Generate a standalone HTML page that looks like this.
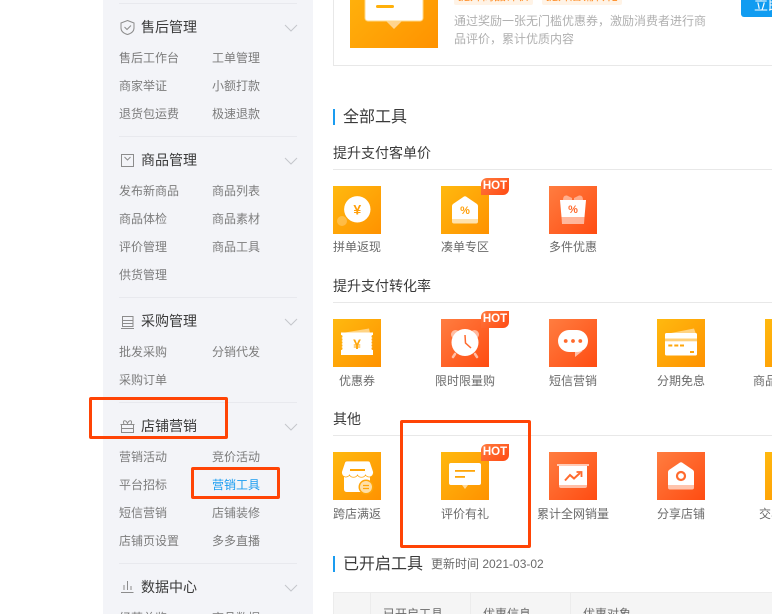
<!DOCTYPE html>
<html lang="zh">
<head>
<meta charset="utf-8">
<title>营销工具</title>
<style>
html,body{margin:0;padding:0;background:#fff}
#p{position:relative;width:772px;height:614px;overflow:hidden;background:#fff;font-family:"Liberation Sans","Noto Sans CJK SC",sans-serif}
#p div,#p span{position:absolute}
.t{line-height:20px;white-space:nowrap}
.s{font-size:12px;color:#7c7c7c}
.h{font-size:14px;color:#3a3a3a;left:141px}
.d{left:119px;width:178px;height:1px;background:#e8e9ee}
.tt{font-size:16px;color:#3a3a3a;left:343px}
.st{font-size:14px;color:#3a3a3a;left:333px}
.ln{left:333px;width:439px;height:1px;background:#e8e8e8}
.lb{font-size:12px;color:#6a6a6a;width:108px;text-align:center}
.hot{width:28px;height:17px;background:linear-gradient(135deg,#ff7a3d,#ff4a14);border-radius:6px 0 6px 0;color:#fff;font-size:11.5px;font-weight:bold;line-height:17px;text-align:center}
.r{border:3px solid #ff4405;border-radius:2px;box-sizing:border-box}
.c1{left:119px}.c2{left:212px}
svg text{font-family:"Liberation Sans",sans-serif;font-weight:bold;text-anchor:middle}
</style>
</head>
<body>
<div id="p">
<div style="left:103px;top:0;width:210px;height:614px;background:#f3f4f8"></div>
<div class="d" style="top:3px"></div>
<div class="d" style="top:136px"></div>
<div class="d" style="top:297px"></div>
<div class="d" style="top:402px"></div>
<div class="d" style="top:563px"></div>

<span class="t h" style="top:17px">售后管理</span>
<span class="t s c1" style="top:48px">售后工作台</span><span class="t s c2" style="top:48px">工单管理</span>
<span class="t s c1" style="top:76px">商家举证</span><span class="t s c2" style="top:76px">小额打款</span>
<span class="t s c1" style="top:104px">退货包运费</span><span class="t s c2" style="top:104px">极速退款</span>

<span class="t h" style="top:150px">商品管理</span>
<span class="t s c1" style="top:181px">发布新商品</span><span class="t s c2" style="top:181px">商品列表</span>
<span class="t s c1" style="top:209px">商品体检</span><span class="t s c2" style="top:209px">商品素材</span>
<span class="t s c1" style="top:237px">评价管理</span><span class="t s c2" style="top:237px">商品工具</span>
<span class="t s c1" style="top:265px">供货管理</span>

<span class="t h" style="top:311px">采购管理</span>
<span class="t s c1" style="top:342px">批发采购</span><span class="t s c2" style="top:342px">分销代发</span>
<span class="t s c1" style="top:370px">采购订单</span>

<span class="t h" style="top:416px">店铺营销</span>
<span class="t s c1" style="top:447px">营销活动</span><span class="t s c2" style="top:447px">竞价活动</span>
<span class="t s c1" style="top:475px">平台招标</span><span class="t s c2" style="top:475px;color:#1a9cf0">营销工具</span>
<span class="t s c1" style="top:503px">短信营销</span><span class="t s c2" style="top:503px">店铺装修</span>
<span class="t s c1" style="top:531px">店铺页设置</span><span class="t s c2" style="top:531px">多多直播</span>

<span class="t h" style="top:577px">数据中心</span>
<span class="t s c1" style="top:608px">经营总览</span><span class="t s c2" style="top:608px">商品数据</span>

<!-- top card -->
<div style="left:333px;top:-10px;width:460px;height:74px;border:1px solid #e8e8e8;box-sizing:content-box"></div>
<div style="left:454px;top:-15px;width:79px;height:20px;background:#fff3e6;border-radius:2px;overflow:hidden"><span class="t" style="left:4px;top:1px;font-size:12px;color:#ff8a1f">提升商品评价</span></div>
<div style="left:542px;top:-15px;width:80px;height:20px;background:#fff3e6;border-radius:2px;overflow:hidden"><span class="t" style="left:4px;top:1px;font-size:12px;color:#ff8a1f">提升店铺转化</span></div>
<span class="t" style="left:454px;top:11px;font-size:12px;color:#b0b0b0">通过奖励一张无门槛优惠券，激励消费者进行商</span>
<span class="t" style="left:454px;top:29px;font-size:12px;color:#b0b0b0">品评价，累计优质内容</span>
<div style="left:741px;top:-10px;width:60px;height:27px;background:#109cf1;border-radius:3px;overflow:hidden"><span class="t" style="left:13px;top:5px;font-size:14px;color:#fff">立即</span></div>

<!-- section titles -->
<div style="left:333px;top:109px;width:2px;height:16px;background:#1a9cf0"></div>
<span class="t tt" style="top:108px">全部工具</span>

<span class="t st" style="top:143px">提升支付客单价</span>
<div class="ln" style="top:169px"></div>
<span class="t st" style="top:276px">提升支付转化率</span>
<div class="ln" style="top:302px"></div>
<span class="t st" style="top:409px">其他</span>
<div class="ln" style="top:435px"></div>

<svg width="772" height="614" viewBox="0 0 772 614" style="position:absolute;left:0;top:0" fill="none">
<defs>
<linearGradient id="y" x1="0" y1="0" x2="1" y2="1"><stop offset="0" stop-color="#ffb90f"/><stop offset="1" stop-color="#ff9200"/></linearGradient>
<linearGradient id="o" x1="0" y1="0" x2="1" y2="1"><stop offset="0" stop-color="#ff7d40"/><stop offset="1" stop-color="#ff4c12"/></linearGradient>
</defs>

<!-- sidebar icons -->
<g stroke="#8c8c8c" stroke-width="1" fill="none">
<path d="M127.5 20.5 L134 23 V28 C134 31.5 131 33.5 127.5 34.5 C124 33.5 121 31.5 121 28 V23 Z"/>
<path d="M124.5 27 L127 29.5 L131 25.5"/>
<rect x="121.5" y="154.5" width="12" height="12"/>
<path d="M124.5 157 L127.5 160 L130.5 157"/>
<path d="M122.5 316.5 H133 V326.5 H122.5 Z M122.5 320.5 H133 M122.5 323.5 H133 M121 328.5 H134"/>
<path d="M121.5 424.5 H133.5 V432.5 H121.5 Z M120.5 424.5 H134.5 M124 424 C122 420 126 419.5 127.5 423.5 C129 419.5 133 420 131 424 M121.5 428.5 H133.5"/>
<path d="M121 592.5 H133.5 M124 590 V585 M127.5 590 V581 M131 590 V586"/>
</g>
<g stroke="#c4c6cc" stroke-width="1" fill="none">
<path d="M285 25 L291 31 L297 25"/>
<path d="M285 158 L291 164 L297 158"/>
<path d="M285 319 L291 325 L297 319"/>
<path d="M285 424 L291 430 L297 424"/>
<path d="M285 585 L291 591 L297 585"/>
</g>

<!-- top illustration -->
<g transform="translate(350,-40)">
<rect width="88" height="88" fill="url(#y)"/>
<path d="M36 61 H52 L44 69 Z" fill="#fff" fill-opacity=".55"/>
<rect x="15" y="10" width="58" height="51" rx="3" fill="#fff" stroke="#ffd98a"/>
<rect x="26" y="45" width="18" height="3" rx="1.5" fill="#ffb00a"/>
</g>

<!-- 拼单返现 -->
<g transform="translate(333,186)">
<rect width="48" height="48" fill="url(#y)"/>
<circle cx="9" cy="35" r="5" fill="#fff" fill-opacity=".25"/>
<circle cx="24.3" cy="23.3" r="13.2" fill="#fff"/>
<text x="24.3" y="28.5" font-size="14" fill="#ff9f0a">¥</text>
</g>

<!-- 凑单专区 -->
<g transform="translate(441,186)">
<rect width="48" height="48" fill="url(#y)"/>
<path d="M11 33 V20 Q11 19 12 18 L23 10.5 Q24 10 25 10.5 L36 18 Q37 19 37 20 V33 Z" fill="#fff"/>
<path d="M11 33 H37 V35.5 Q37 37.5 35 37.5 H13 Q11 37.5 11 35.5 Z" fill="#ffe2ad"/>
<text x="24" y="28" font-size="11" fill="#ff9f0a">%</text>
</g>

<!-- 多件优惠 -->
<g transform="translate(549,186)">
<rect width="48" height="48" fill="url(#o)"/>
<path d="M14 14 Q14 9 18 9.5 L23 12 V15 H14 Z M34 14 Q34 9 30 9.5 L25 12 V15 H34 Z" fill="#fff" fill-opacity=".45"/>
<path d="M11 14 H37 L35.5 31 H12.5 Z" fill="#fff"/>
<path d="M12.5 31 H35.5 L35 38 H13 Z" fill="#fff" fill-opacity=".55"/>
<text x="24" y="27" font-size="11" fill="#ff6a2d">%</text>
</g>

<!-- 优惠券 -->
<g transform="translate(333,319)">
<rect width="48" height="48" fill="url(#y)"/>
<path d="M9 14 L36 9.5 L37 14 Z" fill="#fff" fill-opacity=".5"/>
<path d="M8 13.5 H40 V16 a1.5 1.5 0 0 0 0 3 a1.5 1.5 0 0 0 0 3 a1.5 1.5 0 0 0 0 3 a1.5 1.5 0 0 0 0 3 a1.5 1.5 0 0 0 0 3 V36 H8 V31 a1.5 1.5 0 0 0 0 -3 a1.5 1.5 0 0 0 0 -3 a1.5 1.5 0 0 0 0 -3 a1.5 1.5 0 0 0 0 -3 a1.5 1.5 0 0 0 0 -3 Z" fill="#fff"/>
<text x="24" y="30" font-size="14" fill="#ffa60a">¥</text>
</g>

<!-- 限时限量购 -->
<g transform="translate(441,319)">
<rect width="48" height="48" fill="url(#o)"/>
<circle cx="14.5" cy="15.5" r="4.5" fill="#fff" fill-opacity=".55"/>
<circle cx="33.5" cy="15.5" r="4.5" fill="#fff" fill-opacity=".55"/>
<path d="M14 35 L12 38 M34 35 L36 38" stroke="#fff" stroke-opacity=".6" stroke-width="2.5" stroke-linecap="round"/>
<circle cx="24" cy="23.5" r="13.5" fill="#fff"/>
<path d="M24 16 L24.5 24 L30 29" stroke="#ff6a2d" stroke-width="1.5" fill="none"/>
</g>

<!-- 短信营销 -->
<g transform="translate(549,319)">
<rect width="48" height="48" fill="url(#o)"/>
<path d="M26 32 H33.5 L26 38 Z" fill="#fff" fill-opacity=".6"/>
<rect x="9" y="11" width="30" height="22" rx="11" fill="#fff"/>
<circle cx="16.7" cy="22" r="1.9" fill="#ff6a2d"/>
<circle cx="24" cy="22" r="1.9" fill="#ff6a2d"/>
<circle cx="31.3" cy="22" r="1.9" fill="#ff6a2d"/>
</g>

<!-- 分期免息 -->
<g transform="translate(657,319)">
<rect width="48" height="48" fill="url(#y)"/>
<path d="M14 14 L37 9.5 L39 15 Z" fill="#fff" fill-opacity=".5"/>
<rect x="8" y="14" width="32" height="22.5" rx="1.5" fill="#fff"/>
<rect x="8" y="19.5" width="32" height="2.8" fill="#ffd07a"/>
<rect x="11.3" y="25.5" width="4" height="2" fill="#ffa60a"/>
<rect x="17.3" y="25.5" width="4" height="2" fill="#ffa60a"/>
<rect x="23" y="25.5" width="4" height="2" fill="#ffa60a"/>
<rect x="33" y="32" width="4" height="2" fill="#ffa60a"/>
</g>

<rect x="765" y="319" width="48" height="48" fill="url(#y)"/>

<!-- 跨店满返 -->
<g transform="translate(333,452)">
<rect width="48" height="48" fill="url(#y)"/>
<path d="M11 24 H37 V37 Q37 40 34 40 H14 Q11 40 11 37 Z" fill="#fff"/>
<path d="M14 9 H35 Q37 9 37.5 11 L40.5 20 C40.5 26 34 26 32.5 23 C31 26 26 26 24.5 23 C23 26 18 26 16.5 23 C15 26 8.5 26 8.5 20 L11.5 11 Q12 9 14 9 Z" fill="#fff" stroke="#ffa60a" stroke-width=".8"/>
<rect x="17" y="17" width="15" height="2" fill="#ffa60a"/>
<circle cx="33" cy="35" r="7.5" fill="#ffa60a"/>
<circle cx="33" cy="35" r="6" fill="#ffe0a8"/>
<path d="M30 33.5 H36 M36 36.5 H30" stroke="#ffa60a" stroke-width="1.2"/>
</g>

<!-- 评价有礼 -->
<g transform="translate(441,452)">
<rect width="48" height="48" fill="url(#y)"/>
<path d="M21 33 H27 L24 37 Z" fill="#fff" fill-opacity=".6"/>
<rect x="8" y="11" width="32" height="22" rx="2" fill="#fff"/>
<rect x="14" y="18" width="20" height="1.8" fill="#ffa60a"/>
<rect x="14" y="24" width="10" height="1.8" fill="#ffa60a"/>
</g>

<!-- 累计全网销量 -->
<g transform="translate(549,452)">
<rect width="48" height="48" fill="url(#o)"/>
<rect x="8" y="12" width="32" height="2" fill="#fff" fill-opacity=".65"/>
<rect x="10" y="14" width="28" height="19" fill="#fff"/>
<path d="M10 33 H38 V34 Q38 36 36 36 H12 Q10 36 10 34 Z" fill="#fff" fill-opacity=".6"/>
<path d="M16 28.5 L21 23 L25 26.5 L31 21" stroke="#ff6a2d" stroke-width="2" fill="none"/>
<path d="M27.5 20 H32.5 V25" stroke="#ff6a2d" stroke-width="1.8" fill="none"/>
</g>

<!-- 分享店铺 -->
<g transform="translate(657,452)">
<rect width="48" height="48" fill="url(#o)"/>
<path d="M11 33 V20 Q11 19 12 18 L23 10.5 Q24 10 25 10.5 L36 18 Q37 19 37 20 V33 Z" fill="#fff"/>
<path d="M11 33 H37 V35.5 Q37 37.5 35 37.5 H13 Q11 37.5 11 35.5 Z" fill="#ffc4ad"/>
<circle cx="24" cy="24" r="4" stroke="#ff6a2d" stroke-width="2.2" fill="none"/>
</g>

<rect x="765" y="452" width="48" height="48" fill="url(#y)"/>
</svg>

<div class="hot" style="left:481px;top:178px">HOT</div>
<div class="hot" style="left:481px;top:311px">HOT</div>
<div class="hot" style="left:481px;top:444px">HOT</div>

<span class="t lb" style="left:303px;top:237px">拼单返现</span>
<span class="t lb" style="left:411px;top:237px">凑单专区</span>
<span class="t lb" style="left:519px;top:237px">多件优惠</span>
<span class="t lb" style="left:303px;top:371px">优惠券</span>
<span class="t lb" style="left:411px;top:371px">限时限量购</span>
<span class="t lb" style="left:519px;top:371px">短信营销</span>
<span class="t lb" style="left:627px;top:371px">分期免息</span>
<span class="t lb" style="left:735px;top:371px">商品裂变推广</span>
<span class="t lb" style="left:303px;top:504px">跨店满返</span>
<span class="t lb" style="left:411px;top:504px">评价有礼</span>
<span class="t lb" style="left:519px;top:504px">累计全网销量</span>
<span class="t lb" style="left:627px;top:504px">分享店铺</span>
<span class="t lb" style="left:735px;top:504px">交易额提升</span>

<!-- opened tools -->
<div style="left:333px;top:556px;width:2px;height:16px;background:#1a9cf0"></div>
<span class="t tt" style="top:555px">已开启工具</span>
<span class="t" style="left:431px;top:554px;font-size:12px;color:#6a6a6a">更新时间 2021-03-02</span>

<div style="left:333px;top:592px;width:450px;height:30px;background:#f5f5f5;border:1px solid #ececec;box-sizing:border-box"></div>
<div style="left:370px;top:592px;width:1px;height:22px;background:#ececec"></div>
<div style="left:470px;top:592px;width:1px;height:22px;background:#ececec"></div>
<div style="left:570px;top:592px;width:1px;height:22px;background:#ececec"></div>
<span class="t" style="left:383px;top:604px;font-size:12px;color:#6a6a6a">已开启工具</span>
<span class="t" style="left:483px;top:604px;font-size:12px;color:#6a6a6a">优惠信息</span>
<span class="t" style="left:583px;top:604px;font-size:12px;color:#6a6a6a">优惠对象</span>

<!-- red annotation boxes -->
<div class="r" style="left:89px;top:397px;width:139px;height:42px"></div>
<div class="r" style="left:191px;top:467px;width:89px;height:32px"></div>
<div class="r" style="left:400px;top:420px;width:131px;height:128px"></div>
</div>
</body>
</html>
